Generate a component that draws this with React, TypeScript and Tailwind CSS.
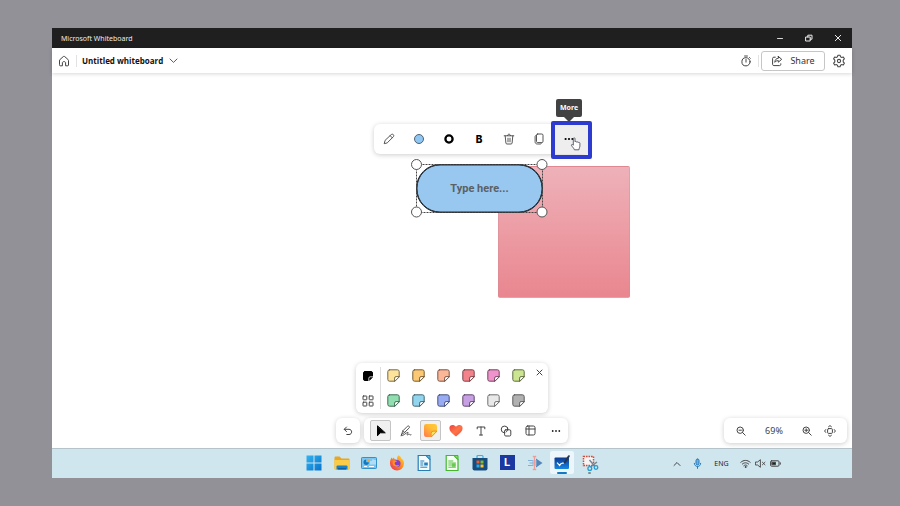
import type { ReactNode } from "react";

type IconProps = { size?: number; width?: number; className?: string; children: ReactNode };

function Icon({ size = 12, width = 1, className = "text-[#444444]", children }: IconProps) {
  return (
    <svg
      width={size}
      height={size}
      viewBox={`0 0 ${size} ${size}`}
      fill="none"
      stroke="currentColor"
      strokeWidth={width}
      strokeLinecap="round"
      strokeLinejoin="round"
      className={`block shrink-0 ${className}`}
      aria-hidden="true"
    >
      {children}
    </svg>
  );
}

function Tool({ label, className = "", children }: { label: string; className?: string; children: ReactNode }) {
  return (
    <button type="button" aria-label={label} className={`flex shrink-0 items-center justify-center ${className}`}>
      {children}
    </button>
  );
}

function Note({ fill, stroke }: { fill: string; stroke: string }) {
  return (
    <Icon size={13}>
      <path
        d="M2.6.8h7.8a1.8 1.8 0 0 1 1.8 1.8v5L7.6 12.2h-5A1.8 1.8 0 0 1 .8 10.4V2.6A1.8 1.8 0 0 1 2.6.8Z"
        fill={fill}
        stroke={stroke}
      />
      <path d="M12.2 7.6H9.1a1.5 1.5 0 0 0-1.5 1.5v3.1Z" fill="#fff" stroke={stroke} />
    </Icon>
  );
}

const notes = [
  { name: "Yellow", fill: "#fde29a", stroke: "#77694a" },
  { name: "Gold", fill: "#fcc873", stroke: "#765c34" },
  { name: "Orange", fill: "#fbb697", stroke: "#795648" },
  { name: "Red", fill: "#f3828b", stroke: "#7b4548" },
  { name: "Pink", fill: "#ee93cb", stroke: "#74465f" },
  { name: "Lime", fill: "#cbe590", stroke: "#5f6c42" },
  { name: "Green", fill: "#91dfb1", stroke: "#426b54" },
  { name: "Sky", fill: "#91d5ee", stroke: "#416673" },
  { name: "Blue", fill: "#99abf3", stroke: "#485179" },
  { name: "Purple", fill: "#c6a0e2", stroke: "#5e496d" },
  { name: "Light gray", fill: "#e9e9e9", stroke: "#707070" },
  { name: "Gray", fill: "#b1b1b1", stroke: "#5c5c5c" },
];

function TitleBar() {
  return (
    <div className="flex h-5 shrink-0 items-center bg-[#1f1f1f] pl-[9px] text-[#ececec]">
      <h1 className="pt-px text-[7px] leading-5">Microsoft Whiteboard</h1>
      <div className="ml-auto flex">
        <Tool label="Minimize" className="h-5 w-[29px]">
          <Icon size={8} className="text-[#d8d8d8]"><path d="M1.5 4.5h5" /></Icon>
        </Tool>
        <Tool label="Restore" className="h-5 w-[29px]">
          <Icon size={8} className="text-[#ececec]">
            <path d="M1 3h4.2v4H1ZM2.8 3V1.2H7v4H5.2" />
          </Icon>
        </Tool>
        <Tool label="Close" className="h-5 w-[29px]">
          <Icon size={8} className="text-[#ececec]"><path d="m1.3 1.3 5.4 5.4M6.7 1.3 1.3 6.7" /></Icon>
        </Tool>
      </div>
    </div>
  );
}

function Header() {
  return (
    <header className="z-10 flex h-[25px] shrink-0 items-center bg-white shadow-[0_1px_4px_rgba(0,0,0,0.16)]">
      <Tool label="Home" className="h-6 w-6">
        <Icon size={12}>
          <path d="M1.5 5.6c0-.5.2-.9.6-1.2l3.3-2.9c.4-.3.8-.3 1.2 0l3.3 2.9c.4.3.6.7.6 1.2v4.5c0 .4-.3.7-.7.7H7.6V7.9c0-.9-.7-1.3-1.6-1.3s-1.6.4-1.6 1.3v2.9H2.2c-.4 0-.7-.3-.7-.7Z" />
        </Icon>
      </Tool>
      <div className="h-3 w-px bg-[#e2e2e2]" />
      <button type="button" className="flex items-center gap-1.5 pl-[5px] text-[#111]">
        <span className="font-['Open_Sans'] text-[8px] leading-4 font-bold">Untitled whiteboard</span>
        <Icon size={9} className="text-[#5c5c5c]"><path d="m1 3 3.5 3.4L8 3" /></Icon>
      </button>
      <div className="ml-auto flex items-center">
        <Tool label="Timer" className="h-6 w-6">
          <Icon size={12}>
            <circle cx="6" cy="6.8" r="4.1" />
            <path d="M6 4.5v2.6M4.6 1h2.8M9.5 2.5l.8.8" />
          </Icon>
        </Tool>
        <div className="mr-[2px] h-3 w-px bg-[#e2e2e2]" />
        <button
          type="button"
          className="flex h-5 w-16 items-center justify-center gap-[7px] rounded-[3px] border border-[#c6c6c6] text-[#333]"
        >
          <Icon size={12}>
            <path d="M4.3 2.2H2.8c-.7 0-1.2.5-1.2 1.2v6c0 .7.5 1.2 1.2 1.2h5.8c.7 0 1.2-.5 1.2-1.2V8.8" />
            <path d="M7.3 1.4 10.7 4.3 7.3 7.2V5.6c-1.5 0-2.6.5-3.5 1.7.1-2.4 1.3-3.9 3.5-4.2Z" />
          </Icon>
          <span className="text-[9px] leading-4">Share</span>
        </button>
        <Tool label="Settings" className="mr-px ml-[2px] h-6 w-6">
          <svg
            width="14"
            height="14"
            viewBox="0 0 12 12"
            fill="none"
            stroke="#444444"
            strokeWidth=".9"
            strokeLinejoin="round"
            aria-hidden="true"
          >
            <path d="m5.1 1 1.8 0 .4 1.4.9.5 1.5-.4.9 1.6-1 1.1v1.6l1 1.1-.9 1.6-1.5-.4-.9.5L6.9 11H5.1l-.4-1.4-.9-.5-1.5.4-.9-1.6 1-1.1V5.2l-1-1.1.9-1.6 1.5.4.9-.5Z" />
            <circle cx="6" cy="6" r="1.4" />
          </svg>
        </Tool>
      </div>
    </header>
  );
}

function ShapeToolbar() {
  return (
    <div
      role="toolbar"
      aria-label="Shape options"
      className="absolute top-[51px] left-[322px] z-10 flex h-[30px] rounded-md bg-white shadow-[0_1px_5px_rgba(0,0,0,0.2)]"
    >
      <Tool label="Edit" className="w-[30px]">
        <Icon size={12} width={0.9}>
          <path d="M8.2 1.6c.5-.5 1.5-.6 2.1 0 .6.6.6 1.6 0 2.2L4.2 9.9l-3 .8.8-3ZM7.2 2.7l2.1 2.1" />
        </Icon>
      </Tool>
      <Tool label="Fill color" className="w-[30px]">
        <span className="size-[10px] rounded-full border border-[#4e6474] bg-[#90c6f2]" />
      </Tool>
      <Tool label="Border" className="w-[30px]">
        <Icon size={10} width={2.3} className="text-black">
          <circle cx="5" cy="5" r="3.6" />
        </Icon>
      </Tool>
      <Tool label="Bold" className="w-[30px]">
        <span className="font-[Inter] text-[10px] leading-4 font-extrabold text-black">B</span>
      </Tool>
      <Tool label="Delete" className="w-[30px]">
        <Icon size={12} width={0.9}>
          <path d="M1.2 2.8h9.6M4.5 2.6c0-2 3-2 3 0M2.2 3l.7 7c.1.7.5 1 1 1h4.2c.5 0 .9-.3 1-1l.7-7M5 5.2v3.6M7 5.2v3.6" />
        </Icon>
      </Tool>
      <Tool label="Copy" className="w-[30px]">
        <Icon size={12} width={0.9}>
          <rect x="3.5" y="1" width="6.5" height="8.6" rx="1.2" />
          <path d="M3.3 2.3c-.8.1-1.2.6-1.2 1.3v5.1c0 1.5.8 2.3 2.3 2.3h2.8c.7 0 1.2-.3 1.3-1" />
        </Icon>
      </Tool>
      <div className="relative w-[34px]">
        <Tool label="More" className="h-full w-full bg-[#eeeeee] pr-1">
          <Icon size={12} className="text-black">
            <g fill="currentColor" stroke="none">
              <circle cx="2.6" cy="6" r="1.1" />
              <circle cx="6" cy="6" r="1.1" />
              <circle cx="9.4" cy="6" r="1.1" />
            </g>
          </Icon>
        </Tool>
        <div className="pointer-events-none absolute -top-[3px] -left-[3px] h-[38px] w-[41px] rounded-xs border-4 border-[#2d3cce]" />
        <div
          role="tooltip"
          className="absolute -top-[25px] left-[2px] h-[18px] w-[26px] rounded-xs bg-[#424242] text-center text-[7px] leading-[18px] font-bold text-white"
        >
          More
          <svg width="10" height="5" viewBox="0 0 10 5" className="absolute top-full left-2" aria-hidden="true">
            <path d="M0 0h10L5 5Z" fill="#424242" />
          </svg>
        </div>
        <svg width="12" height="14" viewBox="0 0 12 14" className="absolute top-[13px] left-4" aria-hidden="true">
          <path
            d="M3.3 1.7c0-1.2 1.7-1.2 1.7 0v3.1c.4-.6 1.5-.4 1.6.3.4-.5 1.5-.3 1.6.4.5-.4 1.7-.2 1.7.8v2.6c0 1.5-.8 2.1-1 3.9H4.4c-.4-1.5-1.9-2.7-2.8-4.1-.6-1 .4-1.8 1.7-.5Z"
            fill="#fff"
            stroke="#4c5064"
            strokeWidth=".9"
            strokeLinejoin="round"
          />
        </svg>
      </div>
    </div>
  );
}

function SelectedShape() {
  return (
    <div className="absolute top-[91px] left-[364px] h-[49px] w-[127px]">
      <input
        aria-label="Shape text"
        placeholder="Type here..."
        className="block h-full w-full rounded-[24px] border border-[#252b31] bg-[#98c8f0] text-center font-[Roboto] text-[11px] leading-4 font-bold placeholder:text-[#5b6064] placeholder:opacity-100"
      />
      <svg width="100%" height="100%" className="pointer-events-none absolute inset-0 overflow-visible" aria-hidden="true">
        <rect x="1" y="1" width="125" height="47" rx="23" fill="none" stroke="#252b31" />
        <rect x="0.5" y="0.5" width="126" height="48" fill="none" stroke="#444" strokeDasharray="2 1" />
        <g fill="#fff" stroke="#555" strokeWidth="1">
          <circle cx="0.5" cy="0.5" r="5" />
          <circle cx="126" cy="0.5" r="5" />
          <circle cx="0.5" cy="48" r="5" />
          <circle cx="126" cy="48" r="5" />
        </g>
      </svg>
    </div>
  );
}

function NotePalette() {
  return (
    <div className="flex h-[50px] w-48 rounded-md bg-white shadow-[0_1px_5px_rgba(0,0,0,0.2)]">
      <div className="flex w-6 flex-col">
        <Tool label="Single note" className="h-[25px]">
          <Icon size={10}>
            <path d="M2 .5h6A1.5 1.5 0 0 1 9.5 2v4.2L6.2 9.5H2A1.5 1.5 0 0 1 .5 8V2A1.5 1.5 0 0 1 2 .5Z" fill="#000" stroke="#000" />
            <path d="M9.6 5.8H7.3a1.5 1.5 0 0 0-1.5 1.5v2.3" stroke="#fff" strokeWidth=".8" />
          </Icon>
        </Tool>
        <Tool label="Note grid" className="h-[25px]">
          <Icon size={12}>
            <rect x="1" y="1" width="3.8" height="3.8" rx=".4" />
            <rect x="7.2" y="1" width="3.8" height="3.8" rx=".4" />
            <rect x="1" y="7.2" width="3.8" height="3.8" rx=".4" />
            <rect x="7.2" y="7.2" width="3.8" height="3.8" rx=".4" />
          </Icon>
        </Tool>
      </div>
      <div className="my-1 w-px bg-[#dedede]" />
      <div className="grid w-[150px] grid-cols-6">
        {notes.map((n) => (
          <Tool key={n.name} label={n.name} className="h-[25px]">
            <Note fill={n.fill} stroke={n.stroke} />
          </Tool>
        ))}
      </div>
      <Tool label="Close palette" className="h-[18px] w-4">
        <Icon size={7}><path d="m1 1 5 5M6 1 1 6" /></Icon>
      </Tool>
    </div>
  );
}

function MainToolbar() {
  return (
    <div className="flex justify-center gap-1">
      <Tool label="Undo" className="h-[25px] w-6 rounded-md bg-white shadow-[0_1px_5px_rgba(0,0,0,0.2)]">
        <Icon size={10}><path d="M3.5 1 1.2 3.3l2.3 2.3M1.4 3.3H6c3.5 0 3.5 5.2 0 5.2H3.8" /></Icon>
      </Tool>
      <div
        role="toolbar"
        aria-label="Drawing tools"
        className="flex h-[25px] items-center rounded-md bg-white pl-1 shadow-[0_1px_5px_rgba(0,0,0,0.2)]"
      >
        <Tool label="Select" className="mx-[2px] h-[21px] w-[21px] rounded-xs border border-[#c4c4c4] bg-[#f0f0f0]">
          <Icon size={12}><path d="M2.5 1.2v9.6l2.6-3h4.8Z" fill="#000" stroke="#000" /></Icon>
        </Tool>
        <Tool label="Ink" className="h-[25px] w-[25px]">
          <Icon size={12} width={0.9}>
            <path d="M1.5 9.5 3 5.7 7.4 1.3c.5-.5 1.2-.5 1.7 0s.5 1.2 0 1.7L4.6 7.4 1.5 9.5ZM3 5.8l1.7 1.7M1 10.8c2.5.4 5.2-3.4 6.8-3.4 1.2 0-1.2 2-.6 2.5.6.4 1.5-1 2.1-.8.5.2.2 1.3 1.7.7" />
          </Icon>
        </Tool>
        <Tool label="Notes" className="mx-[2px] h-[21px] w-[21px] rounded-xs border border-[#c4c4c4] bg-[#f0f0f0]">
          <svg width="13" height="13" viewBox="0 0 12 12" aria-hidden="true">
            <defs>
              <linearGradient id="sticky" x1="0" y1="1" x2="1" y2="0">
                <stop offset="0" stopColor="#ff7850" />
                <stop offset=".6" stopColor="#ffbd33" />
                <stop offset="1" stopColor="#ffcc3c" />
              </linearGradient>
            </defs>
            <path d="M2 0h8a2 2 0 0 1 2 2v5l-5 5H2a2 2 0 0 1-2-2V2a2 2 0 0 1 2-2Z" fill="url(#sticky)" />
            <path d="M12 6.6H8.6a2 2 0 0 0-2 2V12Z" fill="#ffe062" stroke="#ee8a1c" strokeWidth=".8" />
          </svg>
        </Tool>
        <Tool label="Reactions" className="h-[25px] w-[25px]">
          <svg width="14" height="13" viewBox="0 0 14 13" aria-hidden="true">
            <defs>
              <linearGradient id="heart" x1="0" y1="0" x2="1" y2="1">
                <stop offset="0" stopColor="#e94444" />
                <stop offset=".5" stopColor="#ff7445" />
                <stop offset="1" stopColor="#e64c42" />
              </linearGradient>
            </defs>
            <path d="M7 12.5C3.6 10.2.4 7.4.4 4.1.4.4 5 .1 7 2.8 9 .1 13.6.4 13.6 4.1c0 3.3-3.2 6.1-6.6 8.4Z" fill="url(#heart)" />
          </svg>
        </Tool>
        <Tool label="Text" className="h-[25px] w-[25px]">
          <Icon size={10}><path d="M1.2 2.8V1h7.6v1.8M5 1v8M3.5 9h3" /></Icon>
        </Tool>
        <Tool label="Shapes" className="h-[25px] w-[25px]">
          <Icon size={12}>
            <path d="M4 7.8a3.4 3.4 0 1 1 4-3.3" />
            <rect x="4.6" y="4.8" width="6.2" height="6.2" rx="1.2" />
            <path d="M7.5 2.8c.6 1.6-.1 3.5-1.4 4.3" />
          </Icon>
        </Tool>
        <Tool label="Templates" className="h-[25px] w-[25px]">
          <Icon size={11}>
            <rect x="1" y="1" width="9" height="9" rx="1.6" />
            <path d="M4 1v9M1 4h9" />
          </Icon>
        </Tool>
        <Tool label="More tools" className="h-[25px] w-[25px]">
          <Icon size={10}>
            <g fill="#222" stroke="none">
              <circle cx="1.7" cy="5" r=".9" />
              <circle cx="5" cy="5" r=".9" />
              <circle cx="8.3" cy="5" r=".9" />
            </g>
          </Icon>
        </Tool>
      </div>
    </div>
  );
}

function ZoomBar() {
  return (
    <div className="flex h-[25px] items-center rounded-md bg-white shadow-[0_1px_5px_rgba(0,0,0,0.2)]">
      <Tool label="Zoom out" className="h-[25px] w-[34px]">
        <Icon size={10}><circle cx="4.2" cy="4.2" r="3.2" /><path d="m6.6 6.6 2.6 2.6M3 4.2h2.4" /></Icon>
      </Tool>
      <output className="w-8 text-center text-[9px] leading-4 text-[#444]">69%</output>
      <Tool label="Zoom in" className="h-[25px] w-[34px]">
        <Icon size={10}><circle cx="4.2" cy="4.2" r="3.2" /><path d="m6.6 6.6 2.6 2.6M2.8 4.2h2.8M4.2 2.8v2.8" /></Icon>
      </Tool>
      <Tool label="Fit to screen" className="h-[25px] w-[23px] pr-[11px]">
        <Icon size={12}>
          <rect x="3.6" y="3.6" width="4.8" height="4.8" rx="1" />
          <path d="M4.6 1.7 6 .6l1.4 1.1M4.6 10.3 6 11.4l1.4-1.1M1.7 4.6.6 6l1.1 1.4M10.3 4.6 11.4 6l-1.1 1.4" />
        </Icon>
      </Tool>
    </div>
  );
}

function AppSvg({ children }: { children: ReactNode }) {
  return (
    <svg width="18" height="18" viewBox="0 0 18 18" fill="none" aria-hidden="true">
      {children}
    </svg>
  );
}

const apps: { name: string; active?: boolean; icon: ReactNode }[] = [
  {
    name: "Start",
    icon: (
      <AppSvg>
        <defs>
          <linearGradient id="win" x1="0" y1="0" x2="1" y2="1">
            <stop offset="0" stopColor="#35b4ef" />
            <stop offset="1" stopColor="#0872cc" />
          </linearGradient>
        </defs>
        <path d="M1.5 1.5h7v7h-7Zm8 0h7v7h-7Zm-8 8h7v7h-7Zm8 0h7v7h-7Z" fill="url(#win)" />
      </AppSvg>
    ),
  },
  {
    name: "File Explorer",
    icon: (
      <AppSvg>
        <path d="M1.5 3.5q0-1 1-1h4l2 2h7q1 0 1 1v9q0 1-1 1h-13q-1 0-1-1Z" fill="#e6a626" />
        <path d="M1.5 6h15v8.7q0 .8-1 .8h-13q-1 0-1-.8Z" fill="#fbcb48" />
        <path d="M3.5 12.5q0-1 1-1h9q1 0 1 1v3h-11Z" fill="#1680c9" />
        <path d="M5 14h8v1.5H5Z" fill="#0d5fa5" />
      </AppSvg>
    ),
  },
  {
    name: "Control Panel",
    icon: (
      <AppSvg>
        <rect x="1.5" y="3.5" width="15" height="11" rx=".8" fill="#7bc6ee" stroke="#3391c9" />
        <path d="M6.2 5.5a2.7 2.7 0 1 0 2.7 2.7H6.2Z" fill="#1578bd" />
        <path d="M7 4.8v2.6h2.6A2.6 2.6 0 0 0 7 4.8Z" fill="#f6a42b" />
        <path d="M4 12.5h3M9 12.5h5" stroke="#fff" />
        <path d="M11 7v3.5M13 5.5v5M15 6v4.5" stroke="#e6f5fd" />
      </AppSvg>
    ),
  },
  {
    name: "Firefox",
    icon: (
      <AppSvg>
        <defs>
          <linearGradient id="fox" x1="1" y1="0" x2="0" y2="1">
            <stop offset="0" stopColor="#ffe23b" />
            <stop offset=".45" stopColor="#ff8a1e" />
            <stop offset="1" stopColor="#ee275e" />
          </linearGradient>
        </defs>
        <path d="M10.4 1.3c2 .9 2.7 2.2 3.1 3.2 1.8 1 2.6 3 2.5 5A7 7 0 0 1 2 9.6C1.8 7.3 2.6 5 3.6 3.6l1 1.5 1.2-1.5.7 1.3c1 .1 1.9.3 2.7.8-.2-1.8.1-3.2 1.2-4.4Z" fill="url(#fox)" />
        <circle cx="9" cy="9.5" r="3.5" fill="#8240c8" />
        <path d="M4.8 7.2c1.4-1 2.9-.9 4.3 0-1 .8-2.4.8-2.5 2 .4 2.3 3 2.6 4.7 1.5-1 2.8-5.5 2.8-6.5-.6Z" fill="#ff9327" />
      </AppSvg>
    ),
  },
  {
    name: "Writer",
    icon: (
      <AppSvg>
        <path d="M3.2 1.5h8l3.8 4v11H3.2Z" fill="#f5fbff" stroke="#267eb5" strokeWidth="1.2" />
        <path d="M11 1.5h4v4Z" fill="#6bb8df" stroke="#267eb5" />
        <path d="M5.3 7h4M5.3 9h3M5.3 11h3M5.3 13.2h7" stroke="#2280b8" />
        <path d="M9.2 8.5h3.6v3H9.2Z" fill="#2280b8" />
      </AppSvg>
    ),
  },
  {
    name: "Calc",
    icon: (
      <AppSvg>
        <path d="M3.2 1.5h8l3.8 4v11H3.2Z" fill="#f5fff3" stroke="#43b82d" strokeWidth="1.2" />
        <path d="M11 1.5h4v4Z" fill="#8ede68" stroke="#43b82d" />
        <path d="M5.3 7h5M5.3 9h7.5M5.3 11h7.5M5.3 13.2h7.5" stroke="#43b82d" strokeWidth=".9" />
        <path d="M9 9.3h3.6v3.5H9Z" fill="#6cc950" />
      </AppSvg>
    ),
  },
  {
    name: "Microsoft Store",
    icon: (
      <AppSvg>
        <path d="M6 4V2.5q0-1 1-1h4q1 0 1 1V4" stroke="#3aaee6" strokeWidth="1.2" />
        <path d="M1.5 4h15v10.5q0 2-2 2h-11q-2 0-2-2Z" fill="#174d7c" />
        <path d="M5.5 6.5h3v3h-3Z" fill="#f15a29" />
        <path d="M9.5 6.5h3v3h-3Z" fill="#87ba33" />
        <path d="M5.5 10.5h3v3h-3Z" fill="#28a9e8" />
        <path d="M9.5 10.5h3v3h-3Z" fill="#ffc52e" />
      </AppSvg>
    ),
  },
  {
    name: "L",
    icon: (
      <span className="flex size-[15px] items-center justify-center bg-[#1b37a0] font-[Inter] text-[11px] leading-[15px] font-bold text-white">
        L
      </span>
    ),
  },
  {
    name: "Editor",
    icon: (
      <AppSvg>
        <path d="M2 6.5h5M3.5 9h4M2 11.5h5" stroke="#80afd8" strokeWidth="1.2" />
        <path d="M10 4.5 16.5 9 10 13.5Z" fill="#5586b8" />
        <path d="M6 7h5M6 9h5M6 11h5" stroke="#91b7dc" />
        <path d="M8.5 3v12M6.8 2.5h1l.7.7.7-.7h1M6.8 15.5h1l.7-.7.7.7h1" stroke="#ee9c98" strokeWidth="1.3" />
      </AppSvg>
    ),
  },
  {
    name: "Whiteboard",
    active: true,
    icon: (
      <AppSvg>
        <defs>
          <linearGradient id="wb" x1="0" y1="0" x2="0" y2="1">
            <stop offset="0" stopColor="#0c388f" />
            <stop offset="1" stopColor="#1688e3" />
          </linearGradient>
        </defs>
        <rect x="1.5" y="3.5" width="14.5" height="11.5" rx="1" fill="url(#wb)" />
        <path d="m4 8.6 2.6 2.8c1.4-3 2.4-2.2 4.2-2.2" stroke="#fff" strokeWidth="1.2" />
        <path d="m11.8 8.2 4-6" stroke="#25354a" strokeWidth="2" strokeLinecap="round" />
      </AppSvg>
    ),
  },
  {
    name: "Snipping Tool",
    icon: (
      <AppSvg>
        <rect x="2.5" y="2.5" width="10" height="9" fill="#f8f4f3" stroke="#cf4d3d" strokeWidth="1.5" strokeDasharray="1.6 .9" />
        <path d="m8.5 6 5.5 6.5M16 8l-6.5 5" stroke="#6d8595" strokeWidth="1.4" />
        <circle cx="15" cy="13.5" r="1.8" stroke="#239cd5" strokeWidth="1.3" />
        <circle cx="8.8" cy="14.5" r="1.9" stroke="#239cd5" strokeWidth="1.3" />
      </AppSvg>
    ),
  },
];

function Taskbar() {
  return (
    <footer className="z-10 grid h-[30px] shrink-0 grid-cols-[1fr_303px_1fr] border-t border-[#b5c3ca] bg-[#cfe6ee] text-[#252525]">
      <div />
      <nav aria-label="Taskbar" className="grid grid-cols-11">
        {apps.map((app) => (
          <button
            type="button"
            key={app.name}
            aria-label={app.name}
            className={`relative mx-[2px] mt-[2px] mb-1 flex items-center justify-center rounded-xs ${app.active ? "bg-[#edf6fa]" : ""}`}
          >
            {app.icon}
            {app.active && <span className="absolute inset-x-[7px] bottom-0 h-[2px] rounded-full bg-[#1677c5]" />}
            {app.name === "Snipping Tool" && (
              <span className="absolute inset-x-[10px] bottom-0 h-[2px] rounded-full bg-[#808c93]" />
            )}
          </button>
        ))}
      </nav>
      <div className="flex items-center justify-end pr-[68px]">
        <Tool label="Show hidden icons" className="size-5">
          <Icon size={8}><path d="m1 5.5 3-3 3 3" /></Icon>
        </Tool>
        <Tool label="Microphone" className="size-5">
          <Icon size={11} className="text-[#247ab9]">
            <rect x="4" y="1" width="3" height="6" rx="1.5" fill="#6bafe0" />
            <path d="M2.3 5.3c0 4.4 6.4 4.4 6.4 0M5.5 8.6v1.8" />
          </Icon>
        </Tool>
        <button type="button" className="w-[29px] text-center text-[7px] leading-5">ENG</button>
        <Tool label="Network" className="h-5 w-[18px]">
          <Icon size={11}>
            <path d="M.8 4.3c2.8-2.6 6.6-2.6 9.4 0M2.3 6.1c1.9-1.8 4.5-1.8 6.4 0M3.8 7.7c1-.9 2.4-.9 3.4 0" />
            <circle cx="5.5" cy="9" r=".5" fill="currentColor" />
          </Icon>
        </Tool>
        <Tool label="Volume" className="h-5 w-3">
          <Icon size={11} width={0.9}>
            <path d="M.8 4h1.8l2.8-2.3v7.6L2.6 7H.8ZM7.4 4.2l2.6 2.6M10 4.2 7.4 6.8" />
          </Icon>
        </Tool>
        <Tool label="Battery" className="h-5 w-[18px]">
          <Icon size={11}>
            <rect x=".6" y="2.8" width="8.4" height="5.4" rx="1" />
            <path d="M2.2 4.3h3.3v2.4H2.2Z" fill="#222" />
            <path d="M10.3 4.8v1.4" />
          </Icon>
        </Tool>
      </div>
    </footer>
  );
}

export default function App() {
  return (
    <div className="flex min-h-screen bg-[#929197] py-7 pr-12 pl-[52px] font-['Noto_Sans','Open_Sans',sans-serif]">
      <div className="flex min-w-0 flex-1 flex-col bg-white">
        <TitleBar />
        <Header />
        <main className="relative flex flex-1 flex-col justify-end overflow-hidden bg-white pb-[5px]">
          <div className="absolute top-[93px] left-[446px] size-[132px] rounded-xs border border-[#cf8c94]/40 bg-linear-to-b from-[#eeb1b9] to-[#e9868f]" />
          <SelectedShape />
          <ShapeToolbar />
          <div className="mb-[5px] flex justify-center">
            <NotePalette />
          </div>
          <div className="grid grid-cols-[1fr_auto_1fr]">
            <div />
            <MainToolbar />
            <div className="flex justify-end pr-[5px]">
              <ZoomBar />
            </div>
          </div>
        </main>
        <Taskbar />
      </div>
    </div>
  );
}
